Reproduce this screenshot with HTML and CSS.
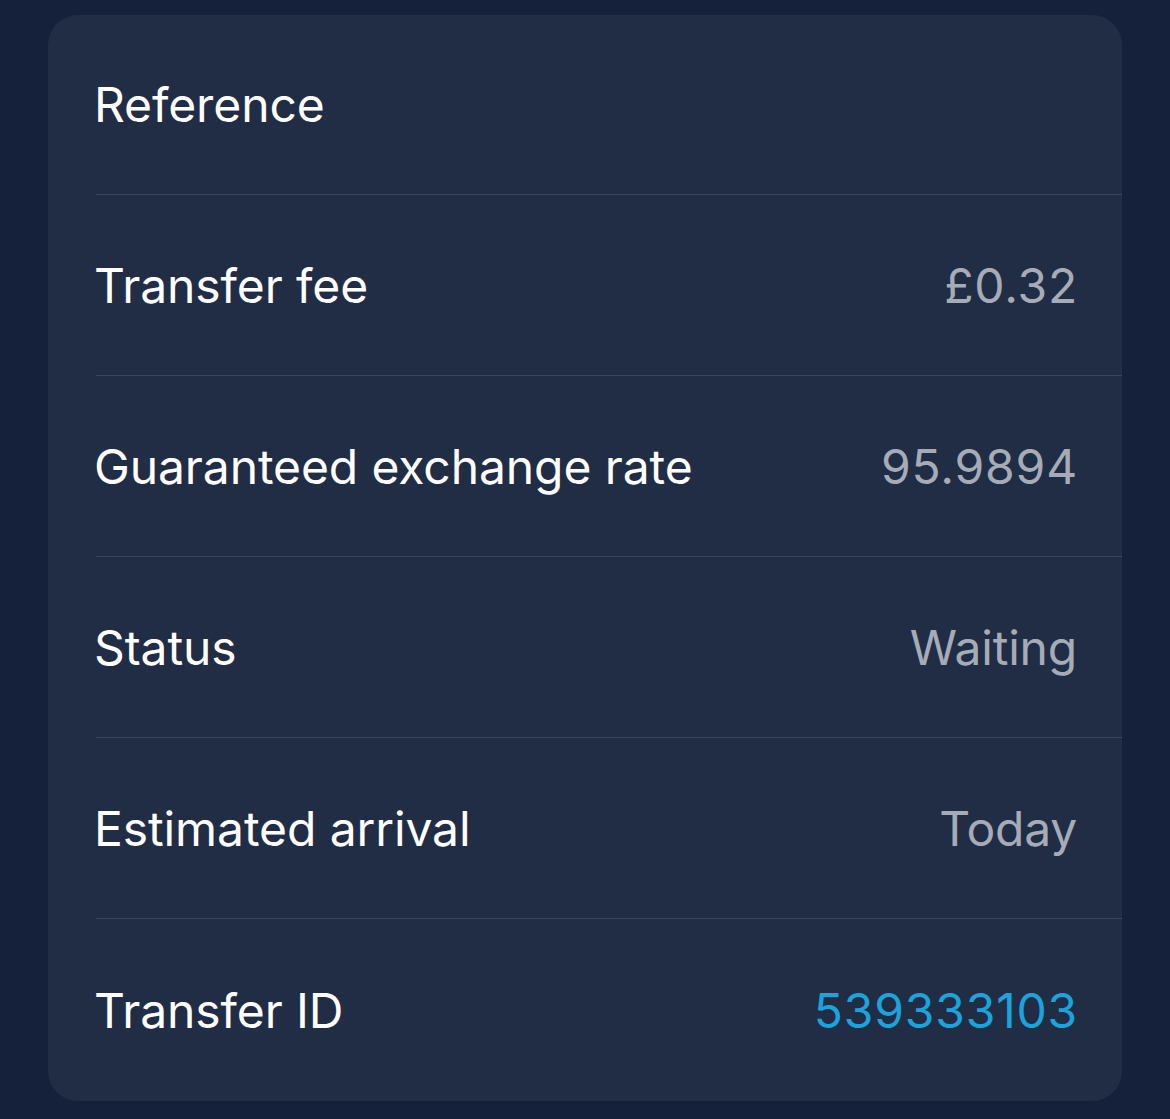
FILE: index.html
```html
<!DOCTYPE html>
<html>
<head>
<meta charset="utf-8">
<link rel="stylesheet" href="styles.css">
</head>
<body>
<div class="card">
  <div class="row"><span class="label">Reference</span></div>
  <div class="row"><span class="label">Transfer fee</span><span class="value num">£0.32</span></div>
  <div class="row"><span class="label">Guaranteed exchange rate</span><span class="value num">95.9894</span></div>
  <div class="row"><span class="label">Status</span><span class="value">Waiting</span></div>
  <div class="row"><span class="label">Estimated arrival</span><span class="value">Today</span></div>
  <div class="row"><span class="label">Transfer ID</span><span class="value num link">539333103</span></div>
</div>
</body>
</html>
```
FILE: styles.css
```css
html, body {
  margin: 0;
  padding: 0;
  background: #15213a;
}
body {
  padding: 15px 48px 0 48px;
  font-family: Inter, "Noto Sans", sans-serif;
  -webkit-font-smoothing: antialiased;
}
.card {
  background: #212d45;
  border-radius: 30px;
  padding-left: 48px;
}
.row {
  display: flex;
  align-items: center;
  justify-content: space-between;
  height: 180px;
  padding-right: 45px;
  border-bottom: 1px solid #38455c;
}
.row:first-child {
  height: 179px;
}
.row:last-child {
  border-bottom: none;
  height: 182px;
}
.label {
  color: #ffffff;
  font-size: 48px;
  letter-spacing: -0.1px;
  margin-left: -2px;
}
.value {
  color: #a5acb8;
  font-size: 48px;
  letter-spacing: -0.2px;
}
.value.num {
  letter-spacing: 0.8px;
  margin-right: -1px;
}
.value.link {
  color: #1ba3dc;
}
```
